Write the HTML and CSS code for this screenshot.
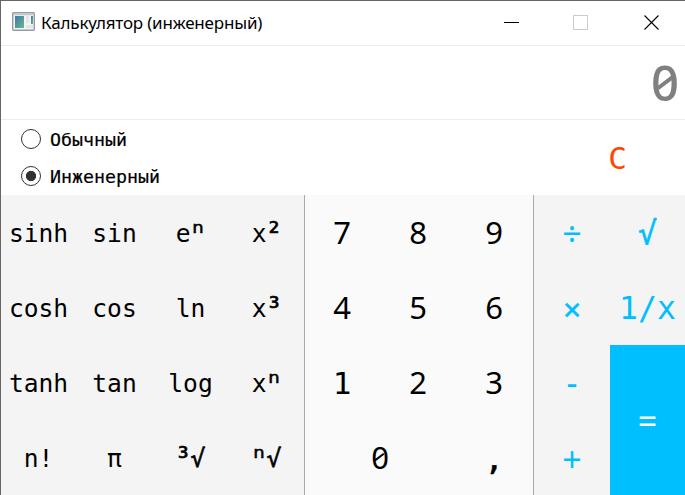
FILE: index.html
```html
<!DOCTYPE html>
<html lang="ru">
<head>
<meta charset="utf-8">
<title>Калькулятор</title>
<link rel="stylesheet" href="styles.css">
</head>
<body>
<main class="window">
  <header class="titlebar">
    <svg class="app-icon" width="23" height="19" viewBox="0 0 23 19">
      <defs>
        <linearGradient id="pane" x1="0" y1="0" x2="1" y2="1"><stop offset="0" stop-color="#4278ad"/><stop offset="1" stop-color="#62b98a"/></linearGradient>
      </defs>
      <rect x=".7" y=".7" width="21.6" height="17.6" rx="1" fill="#f4f4f4" stroke="#959ba1" stroke-width="1.4"/>
      <path d="M1.5 2.5h20" stroke="#c3c9d0" stroke-width="1.6"/>
      <rect x="3" y="4" width="9" height="12" fill="url(#pane)"/>
      <path d="M14 4h3v7h-3zM14 13h7v3h-7z" fill="#e5e5e5"/>
      <rect x="19" y="4" width="2" height="8" fill="url(#pane)"/>
    </svg>
    <h1 class="title">Калькулятор (инженерный)</h1>
    <svg class="controls" width="156" height="16" viewBox="0 0 156 16" fill="none" shape-rendering="crispEdges">
      <path d="M0 7.5h15" stroke="#000"/>
      <rect x="69.500" y=".5" width="14" height="14" stroke="#ccc"/>
      <path d="M140.500 .5l14 14M154.500 .5l-14 14" stroke="#000" shape-rendering="auto" stroke-width="1.1"/>
    </svg>
  </header>
  <output class="display"><span class="zero">0</span></output>
  <section class="modes">
    <div class="radios">
      <label class="radio"><span class="dot"></span>Обычный</label>
      <label class="radio"><span class="dot checked"></span>Инженерный</label>
    </div>
    <button class="clear">C</button>
  </section>
  <section class="pad">
    <div class="functions">
      <button>sinh</button><button>sin</button><button>e<b class="sup">ⁿ</b></button><button>x<b class="sup">²</b></button>
      <button>cosh</button><button>cos</button><button>ln</button><button>x<b class="sup">³</b></button>
      <button>tanh</button><button>tan</button><button>log</button><button>x<b class="sup">ⁿ</b></button>
      <button>n!</button><button>π</button><button><b class="sup">³</b><b>√</b></button><button><b class="sup">ⁿ</b><b>√</b></button>
    </div>
    <div class="digits">
      <button>7</button><button>8</button><button>9</button>
      <button>4</button><button>5</button><button>6</button>
      <button class="mono">1</button><button>2</button><button>3</button>
      <button class="wide"><span class="zero">0</span></button><button class="mono comma">,</button>
    </div>
    <div class="operators">
      <button class="sign">÷</button><button><b>√</b></button>
      <button class="sign times">×</button><button>1/x</button>
      <button class="sign minus">-</button><button class="equals sign">=</button>
      <button class="sign plus">+</button>
    </div>
  </section>
</main>
</body>
</html>
```
FILE: styles.css
```css
* { box-sizing: border-box; }
body { margin: 0; overflow: hidden; background: #fff; }
.window {
  width: 685px; height: 495px;
  border: solid #666; border-width: 1px 0 0 1px;
  display: grid; grid-template-rows: 45px 74px 75px 300px;
  font-family: "DejaVu Sans Mono", monospace;
  color: #000;
}
.titlebar { display: flex; align-items: center; border-bottom: 1px solid #ececec; padding: 0 25px 0 11px; }
.app-icon { margin-top: -3px; }
.title { margin: 0 0 0 6px; flex: 1; font: 400 17px/24px "Noto Sans", sans-serif; letter-spacing: -.18px; white-space: nowrap; }
.display {
  display: flex; align-items: center; justify-content: flex-end;
  border-bottom: 1px solid #ececec; padding: 0 6px 2px 0;
  font: 500 49px/60px "Noto Sans", sans-serif; color: #808080;
}
.modes { display: flex; }
.radios { width: 533px; padding-left: 20px; }
.radio { display: flex; align-items: center; height: 37.500px; gap: 9px; padding-top: 1px; font-size: 18.300px; -webkit-text-stroke: .2px currentColor; }
.dot { width: 20px; height: 20px; margin-top: -1px; border: 1px solid #333; border-radius: 50%; }
.checked { background: radial-gradient(circle, #333 4.800px, #fff 5.400px); }
button { border: 0; padding: 0; margin: 0; background: none; color: inherit; font: inherit; white-space: nowrap; min-width: 0; }
b { font-weight: 400; -webkit-text-stroke: .6px currentColor; }
.sup { font-size: 1.15em; line-height: 1; margin: 0 -.04em; }
.clear { flex: 1; font-size: 31px; color: #ff4500; padding-left: 16px; }
.pad { display: grid; grid-template-columns: 304px 229px 151px; }
.functions, .digits, .operators { display: grid; grid-template-rows: repeat(4, 75px); }
.functions { grid-template-columns: repeat(4, 76px); background: #f4f4f4; border-right: 1px solid #a9a9a9; font-size: 24.600px; line-height: 28px; }
.functions button { padding: 2px 1px 0 0; }
.digits { grid-template-columns: repeat(3, 76px); background: #fafafa; border-right: 1px solid #a9a9a9; font: 31px "Noto Sans", sans-serif; }
.digits button { padding: 0 2px 2px 0; }
.digits .mono { font-family: "DejaVu Sans Mono", monospace; padding-bottom: 0; }
.digits .comma { padding-top: 2px; -webkit-text-stroke: .7px currentColor; }
.zero { position: relative; }
.zero::after {
  content: ""; position: absolute; left: 50%; top: 50%;
  width: .36em; height: .075em; margin: -.02em 0 0 -.18em;
  background: currentColor; transform: rotate(-37deg);
}
.wide { grid-column: span 2; }
.operators { grid-template-columns: 76px 75px; background: #f4f4f4; color: #00bfff; font-size: 31.500px; }
.operators .sign { font: 34px "Noto Sans", sans-serif; }
.operators .times { padding-top: 3px; font-size: 31px; -webkit-text-stroke: .6px currentColor; }
.operators .plus { padding-top: 3px; }
.operators .minus { padding-bottom: 2px; }
.equals { grid-row: span 2; }
.operators .equals { background: #00bfff; color: #fff; padding-top: 2px; }
```
